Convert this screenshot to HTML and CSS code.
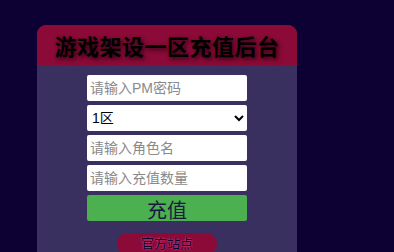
FILE: index.html
```html
<!DOCTYPE html>
<html lang="zh-CN">
<head>
    <meta charset="UTF-8">
    <meta name="viewport" content="width=device-width, initial-scale=1.0">
    <title>游戏架设一区充值后台</title>
    <link rel="stylesheet" href="styles.css">
</head>
<body>
    <div class="panel">
        <div class="panel-head">
            <h1>游戏架设一区充值后台</h1>
        </div>
        <form class="pay-form">
            <input type="password" class="field" placeholder="请输入PM密码">
            <select class="field">
                <option value="1">1区</option>
            </select>
            <input type="text" class="field" placeholder="请输入角色名">
            <input type="text" class="field" placeholder="请输入充值数量">
            <button type="button" class="pay-btn">充值</button>
            <a class="site-link" href="#">官方站点</a>
        </form>
    </div>
</body>
</html>
```

FILE: styles.css
```css
body {
    margin: 0;
    background: #0d0032;
    font-family: "Liberation Sans", Arial, "Noto Sans CJK SC", sans-serif;
}
.panel {
    width: 260px;
    margin: 25px 0 0 37px;
    background: #3a3060;
    border-radius: 9px 9px 0 0;
    overflow: hidden;
}
.panel-head {
    height: 40px;
    background: #8b0a37;
    display: flex;
    align-items: center;
    justify-content: center;
}
.panel-head h1 {
    margin: 0;
    font-size: 22px;
    font-weight: bold;
    color: #000;
    text-shadow: 2px 2px 4px rgba(0, 0, 0, 0.7);
    font-family: "Noto Sans CJK SC", sans-serif;
    letter-spacing: 0.5px;
    line-height: 1;
}
.pay-form {
    display: flex;
    flex-direction: column;
    align-items: center;
    gap: 4px;
    padding: 10px 0 20px;
}
.field {
    box-sizing: border-box;
    width: 160px;
    height: 26px;
    border: none;
    border-radius: 2px;
    padding: 0 3px;
    font-size: 14px;
    font-family: "Liberation Sans", "Noto Sans CJK SC", sans-serif;
    background: #fff;
    color: #000;
}
select.field {
    padding-left: 1px;
}
.field::placeholder {
    color: #8a8a8a;
}
.pay-btn {
    box-sizing: border-box;
    width: 160px;
    height: 26px;
    border: none;
    border-radius: 2px;
    background: #4caf50;
    color: #1a1a3e;
    font-size: 20px;
    line-height: 26px;
    padding: 2px 0 0;
    font-family: "Noto Sans CJK SC", sans-serif;
}
.site-link {
    margin-top: 8px;
    width: 100px;
    height: 22px;
    line-height: 19px;
    border-radius: 11px;
    background: #8b0a37;
    color: #0d0032;
    text-align: center;
    text-decoration: none;
    font-size: 13px;
    font-family: "Noto Sans CJK SC", sans-serif;
    text-shadow: 0 0 2px #ff5fa8;
}
```
